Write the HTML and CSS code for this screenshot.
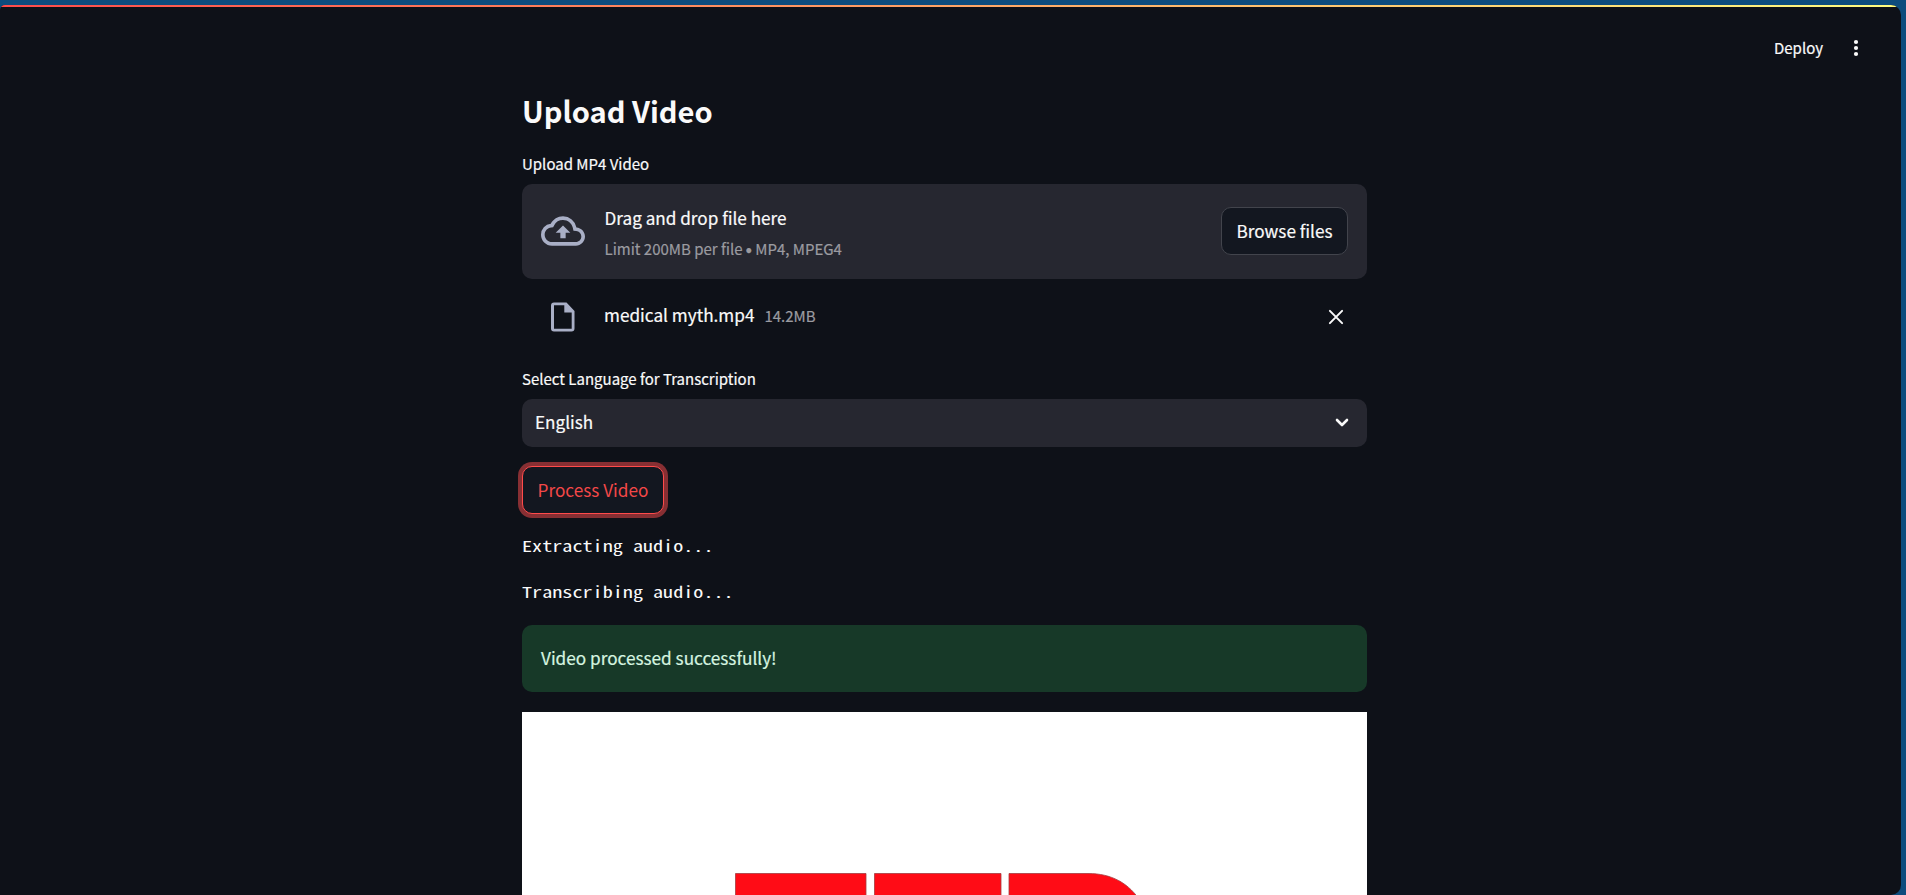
FILE: index.html
```html
<!DOCTYPE html>
<html lang="en">
<head>
<meta charset="utf-8">
<title>Upload Video</title>
<link rel="stylesheet" href="styles.css">
</head>
<body>
<div class="app">
  <div class="rainbow"></div>
  <header class="toolbar">
    <span class="deploy">Deploy</span>
    <svg class="dots" width="6" height="18" viewBox="0 0 6 18"><circle cx="3" cy="3" r="2.1"/><circle cx="3" cy="9" r="2.1"/><circle cx="3" cy="15" r="2.1"/></svg>
  </header>
  <main class="content">
    <h2 class="title"><span>Upload Video</span></h2>
    <label class="label label-upload"><span>Upload MP4 Video</span></label>
    <section class="dropzone">
      <svg class="cloud" width="44" height="44" viewBox="0 0 24 24"><path d="M19.35 10.04A7.49 7.49 0 0 0 12 4C9.11 4 6.6 5.64 5.35 8.04A5.994 5.994 0 0 0 0 14c0 3.31 2.69 6 6 6h13c2.76 0 5-2.24 5-5 0-2.64-2.05-4.78-4.65-4.96zM19 18H6c-2.21 0-4-1.79-4-4 0-2.05 1.53-3.76 3.56-3.97l1.07-.11.5-.95A5.469 5.469 0 0 1 12 6c2.62 0 4.88 1.86 5.39 4.43l.3 1.5 1.53.11A2.98 2.98 0 0 1 22 15c0 1.65-1.35 3-3 3zM8 13h2.55v3h2.9v-3H16l-4-4z"/></svg>
      <div class="drop-text"><span class="drop-main">Drag and drop file here</span><span class="drop-sub">Limit 200MB per file <span class="bullet">•</span> MP4, MPEG4</span></div>
      <button class="btn browse"><span>Browse files</span></button>
    </section>
    <div class="file">
      <svg class="doc" width="24" height="30" viewBox="0 0 24 30"><path fill-rule="evenodd" d="M3 .5h12.500L23.500 9v17.500a3 3 0 0 1-3 3H3a3 3 0 0 1-3-3v-23a3 3 0 0 1 3-3zM3 3.300v23.400h17.700V10.500h-7.400V3.300z"/></svg>
      <span class="file-name">medical myth.mp4</span><span class="file-size">14.2MB</span>
      <svg class="close" width="16" height="16" viewBox="0 0 16 16"><path d="M1.900 1.900l12.200 12.200M14.100 1.900L1.900 14.100"/></svg>
    </div>
    <label class="label label-lang"><span>Select Language for Transcription</span></label>
    <div class="select"><span>English</span><svg width="14" height="9" viewBox="0 0 14 9"><path d="M2 2l5 5 5-5"/></svg></div>
    <button class="btn process"><span>Process Video</span></button>
    <div class="mono"><span>Extracting audio...</span></div>
    <div class="mono"><span>Transcribing audio...</span></div>
    <div class="success"><span>Video processed successfully!</span></div>
    <div class="video">
      <svg width="845" height="183" viewBox="0 0 845 183"><g fill="#ff0c16" stroke="#a33c40" stroke-width=".8"><path d="M213.500 161.500h130.500v30h-130.500zM352.500 161.500h126.500v30h-126.500zM487 161.500h79c23 0 41 9 54 30H487z"/></g></svg>
    </div>
  </main>
</div>
</body>
</html>
```
FILE: styles.css
```css
* { box-sizing: border-box; }
html, body { margin: 0; height: 895px; overflow: hidden; background: #0d4c7d; }
body { padding: 5px 5px 0 0; font-family: "Noto Sans CJK SC", sans-serif; color: #fafafa; -webkit-text-stroke: .2px currentColor; }
.app { height: 890px; background: #0e1118; border-radius: 5px 10px 10px 0; overflow: hidden; }
.rainbow { height: 2px; background: linear-gradient(90deg, #ff4b4b, #fffd80); }
.toolbar { height: 81px; display: flex; justify-content: flex-end; align-items: center; gap: 30px; padding-right: 42px; }
.deploy { font-size: 15px; }
.dots { fill: #fafafa; }
.content { width: 845px; margin-left: 522px; display: flex; flex-direction: column; }
.title { margin: 0; height: 52px; padding-bottom: 6px; display: flex; align-items: center; font-size: 29.1px; font-weight: 700; line-height: 1; white-space: nowrap; -webkit-text-stroke: 0; }
.label { height: 44px; padding-top: 2px; display: flex; align-items: center; font-size: 15px; line-height: 1; }
.dropzone { height: 95px; padding: 0 19px 2px 19px; display: flex; align-items: center; background: #262730; border-radius: 10px; }
.cloud, .doc { fill: #a9afc6; }
.drop-text { display: flex; flex-direction: column; gap: 15px; margin-left: 19.5px; padding-top: 5px; flex: 1; line-height: 1; }
.drop-main { font-size: 17.15px; }
.drop-sub { font-size: 15px; color: #9b9ba0; }
.bullet { font-family: Lato, sans-serif; font-size: 13px; margin: 0 -.8px; }
.btn { height: 48px; padding: 0; display: flex; align-items: center; justify-content: center; background: #131720; border: 1px solid #42444c; border-radius: 10px; color: #fafafa; font-family: inherit; font-size: 17.2px; line-height: 1; }
.browse { width: 127px; }
.file { height: 76px; padding: 0 23px 0 29.4px; display: flex; align-items: center; line-height: 1; }
.file-name { font-size: 17.2px; margin-left: 28.6px; padding-bottom: 4px; }
.file-size { font-size: 15px; margin-left: 10px; padding-bottom: 4px; color: #9b9ba0; }
.close { margin-left: auto; stroke: #fafafa; stroke-width: 2; fill: none; stroke-linecap: round; }
.label-lang { padding-top: 2px; }
.select { height: 48px; padding: 0 18px 0 13px; display: flex; align-items: center; justify-content: space-between; background: #262730; border-radius: 10px; font-size: 17.1px; line-height: 1; }
.select span { padding-bottom: 2px; }
.select svg { stroke: #fafafa; stroke-width: 2.6; fill: none; stroke-linecap: round; stroke-linejoin: round; margin-bottom: 2px; }
.process { width: 142px; margin: 19px 0 9px; color: #f44848; border-color: #ff4b4b; box-shadow: 0 0 0 4px #872f33; -webkit-text-stroke: 0; }
.mono { height: 46px; padding-bottom: 2px; display: flex; align-items: center; font-family: "Noto Sans Mono CJK SC", "Liberation Mono", monospace; font-size: 15px; line-height: 1; -webkit-text-stroke: 0; }
.mono span { transform: scaleX(1.344); transform-origin: left; }
.success { height: 67px; margin: 10px 0 20px; padding: 0 0 2px 19px; display: flex; align-items: center; background: #173928; border-radius: 10px; color: #d6f5e0; font-size: 17.2px; line-height: 1; }
.video { height: 183px; background: #fff; }
.video svg { display: block; }
```
